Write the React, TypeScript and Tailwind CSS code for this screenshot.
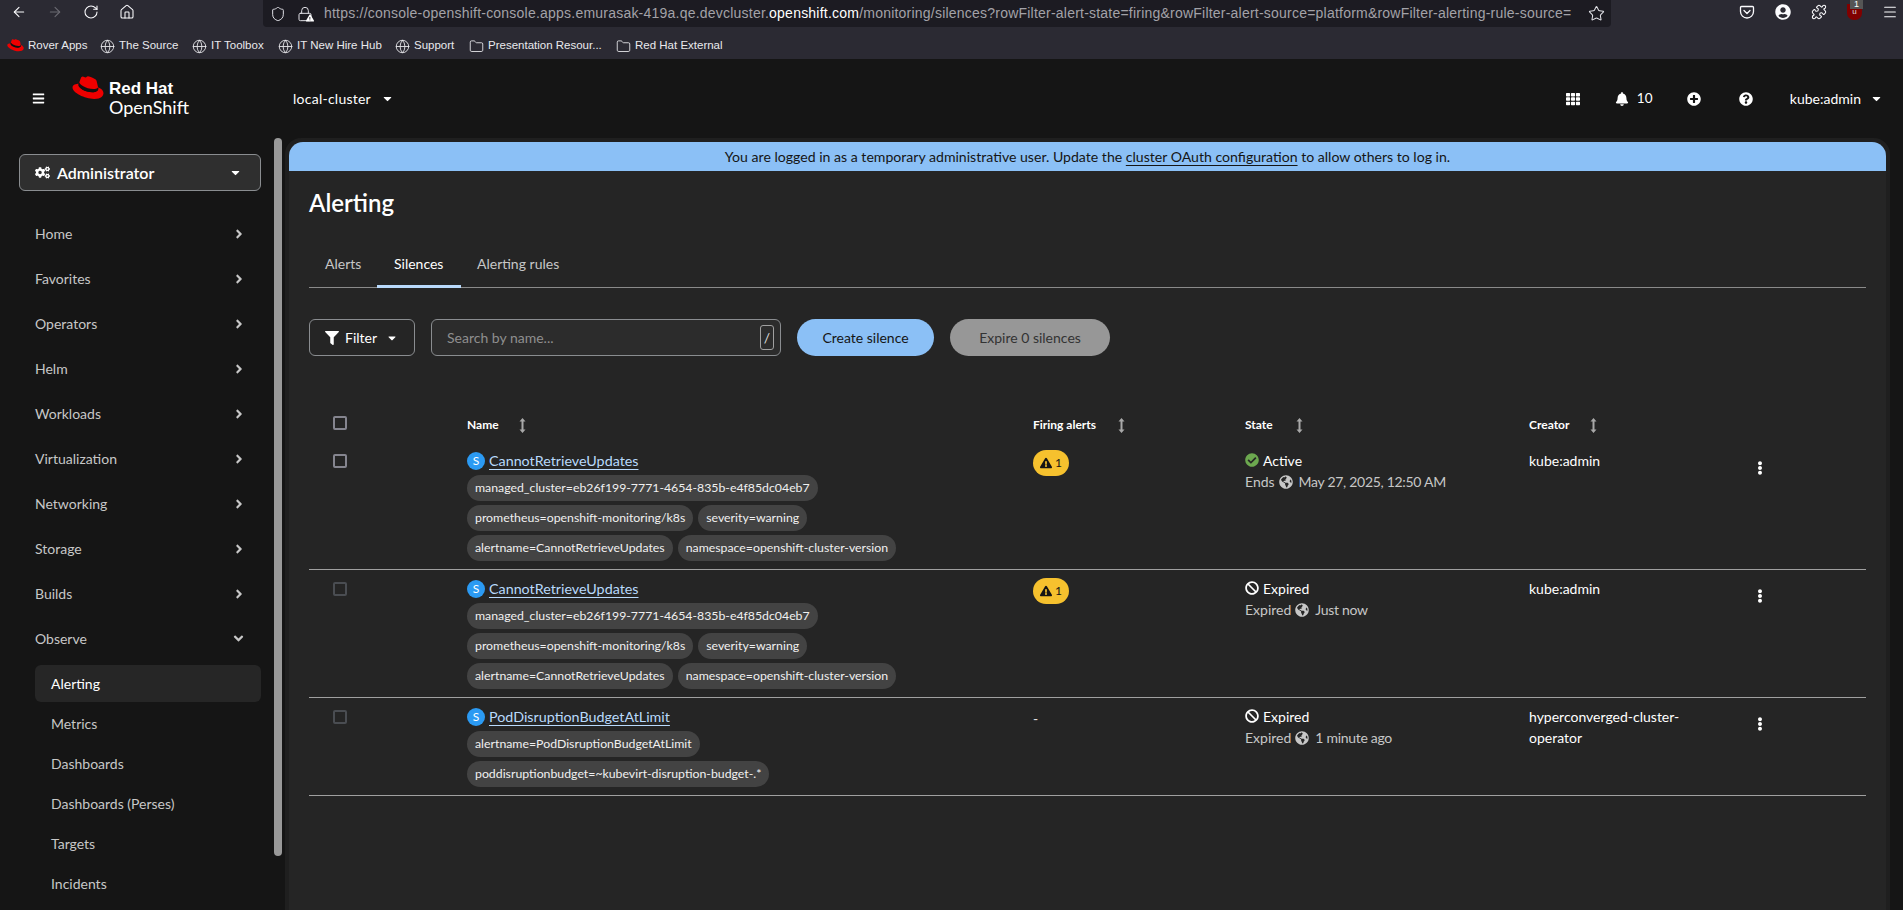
import React from "react";
import { ArrowLeft, ArrowRight, RotateCw, Home, Shield, Lock, Star, Globe, Folder, Menu, Puzzle } from "lucide-react";
import { FaAngleRight, FaAngleDown, FaBan, FaBars, FaBell, FaCaretDown, FaCheckCircle, FaCogs, FaEllipsisV, FaExclamationTriangle, FaFilter, FaGlobeAmericas, FaPlusCircle, FaQuestionCircle, FaTh, FaUserCircle } from "react-icons/fa";

function Hat({ size }: { size: number }) {
  return (
    <svg width={size} height={size * 0.78} viewBox="0 0 32 25" className="shrink-0">
      <path d="M21 14c2 0 5-.4 5-2.800 0-.2 0-.4-.1-.6L24.700 5.300C24.400 4.100 24.100 3.600 22 2.500 20.400 1.700 16.900.3 15.900.3c-1 0-1.200 1.200-2.300 1.200-1.100 0-1.900-.9-2.900-.9s-1.600.7-2.100 2.100c0 0-1.400 3.900-1.600 4.500 0 .1 0 .2 0 .3 0 1.500 5.900 6.500 14 6.500z" fill="#ee0000" />
      <path d="M26 11.200c.3 1.300.3 1.400.3 1.600 0 2.200-2.500 3.500-5.800 3.500-7.500 0-14-4.400-14-7.300 0-.4.100-.8.300-1.200C4.100 8 .5 8.500.5 11.600c0 5.100 12.100 11.400 21.700 11.400 7.400 0 9.300-3.300 9.300-6 0-2.100-1.800-4.500-5.500-5.800z" fill="#ee0000" />
      <path d="M26 11.200c.3 1.300.3 1.400.3 1.600 0 2.200-2.500 3.500-5.800 3.500-7.500 0-14-4.400-14-7.300 0-.4.100-.8.300-1.200l.6-1.500c0 .1 0 .2 0 .3 0 1.500 5.900 6.500 14 6.500 2 0 5-.4 5-2.800 0-.2 0-.4-.1-.6z" fill="#111" />
    </svg>
  );
}

function SortIcon() {
  return (
    <svg width="7" height="15" viewBox="0 0 7 15" className="shrink-0 text-[#a8a8a8]">
      <path d="M3.500 0 6.500 3.500H4.500V11.500H6.500L3.500 15 .5 11.500H2.500V3.500H.5Z" fill="currentColor" />
    </svg>
  );
}

function PocketIcon() {
  return (
    <svg width="16" height="16" viewBox="0 0 16 16" fill="none" stroke="currentColor" strokeWidth="1.300" className="shrink-0">
      <path d="M2.500 2.500h11a1 1 0 0 1 1 1v4a6.500 6.500 0 0 1-13 0v-4a1 1 0 0 1 1-1z" />
      <path d="M5 6.500 8 9.500 11 6.500" strokeLinecap="round" strokeLinejoin="round" />
    </svg>
  );
}

function Bookmark({ icon, label, w }: { icon: "hat" | "globe" | "folder"; label: string; w: string }) {
  return (
    <div className={`flex items-center gap-[4px] ${w}`}>
      {icon === "hat" && <Hat size={17} />}
      {icon === "globe" && <Globe size={15} strokeWidth={1.4} className="shrink-0" />}
      {icon === "folder" && <Folder size={15} strokeWidth={1.4} className="shrink-0" />}
      <span className="whitespace-nowrap">{label}</span>
    </div>
  );
}

function BrowserChrome() {
  return (
    <div className="h-[59px] bg-[#2b2a33] text-[#fbfbfe] font-['Liberation_Sans',sans-serif]">
      <div className="h-[27px] flex items-center relative">
        <div className="w-[263px] shrink-0 flex items-center gap-[20px] pl-[11px] -mt-[3px]">
          <ArrowLeft size={16} strokeWidth={1.6} />
          <ArrowRight size={16} strokeWidth={1.6} className="text-[#6b6a72]" />
          <RotateCw size={16} strokeWidth={1.6} />
          <Home size={16} strokeWidth={1.6} />
        </div>
        <div className="w-[1348px] h-[27px] bg-[#1c1b22] rounded-b-[4px] flex items-center text-[14px] pl-[7px] pr-[6px] text-[#a3a2a8] overflow-hidden">
          <Shield size={16} strokeWidth={1.5} className="shrink-0 text-[#e0e0e6]" />
          <span className="relative ml-[11px] shrink-0">
            <Lock size={16} strokeWidth={1.5} className="text-[#e0e0e6]" />
            <FaExclamationTriangle size={8} className="absolute -right-[1px] bottom-0 text-white" />
          </span>
          <span className="ml-[11px] whitespace-nowrap overflow-hidden flex-1 tracking-[0.22px]">
            https://console-openshift-console.apps.emurasak-419a.qe.devcluster.<span className="text-white">openshift.com</span>/monitoring/silences?rowFilter-alert-state=firing&amp;rowFilter-alert-source=platform&amp;rowFilter-alerting-rule-source=
          </span>
          <Star size={17} strokeWidth={1.5} className="shrink-0 ml-[13px] text-[#e0e0e6]" />
        </div>
        <div className="flex items-center gap-[20px] ml-[128px] -mt-[3px]">
          <PocketIcon />
          <FaUserCircle size={16} />
          <Puzzle size={16} strokeWidth={1.6} />
          <div className="relative w-[15px] h-[16px] rounded-b-[7px] bg-[#800000] text-[8px] text-center text-[#ddd] leading-[16px]">
            u
            <span className="absolute -top-[5px] left-[3px] w-[13px] h-[10px] bg-[#555] text-[9px] leading-[10px] text-white">1</span>
          </div>
          <Menu size={16} strokeWidth={1.6} />
        </div>
      </div>
      <div className="h-[32px] flex items-center text-[11.500px] pl-[7px] pt-[6px] text-[#e9e9ed]">
        <Bookmark icon="hat" label="Rover Apps" w="w-[93px]" />
        <Bookmark icon="globe" label="The Source" w="w-[92px]" />
        <Bookmark icon="globe" label="IT Toolbox" w="w-[86px]" />
        <Bookmark icon="globe" label="IT New Hire Hub" w="w-[117px]" />
        <Bookmark icon="globe" label="Support" w="w-[74px]" />
        <Bookmark icon="folder" label="Presentation Resour..." w="w-[147px]" />
        <Bookmark icon="folder" label="Red Hat External" w="w-[110px]" />
      </div>
    </div>
  );
}

function Masthead() {
  return (
    <div className="h-[79px] flex items-center text-white">
      <FaBars size={13} className="ml-[32px] shrink-0" />
      <div className="ml-[27px] flex items-start w-[221px] self-start mt-[17px]">
        <Hat size={32} />
        <div className="ml-[5px]">
          <div className="text-[17px] leading-[17px] font-bold pt-[4px] font-['Liberation_Sans',sans-serif]">Red Hat</div>
          <div className="text-[18px] leading-[18px] pt-[1px] font-normal">OpenShift</div>
        </div>
      </div>
      <span className="text-[14px] tracking-[0.25px]">local-cluster</span>
      <FaCaretDown size={13} className="ml-[10px]" />
      <div className="ml-auto flex items-center pr-[20px]">
        <FaTh size={14} />
        <FaBell size={14} className="ml-[35px]" />
        <span className="text-[13.500px] ml-[8px] w-[15px]">10</span>
        <FaPlusCircle size={14} className="ml-[35px]" />
        <FaQuestionCircle size={14} className="ml-[38px]" />
        <span className="text-[14px] ml-[37px]">kube:admin</span>
        <FaCaretDown size={13} className="ml-[9px]" />
      </div>
    </div>
  );
}

function NavRow({ label, open }: { label: string; open?: boolean }) {
  return (
    <div className="h-[45px] flex items-center justify-between pl-[35px] pr-[39px] text-[14px] text-[#c7c7c7]">
      <span>{label}</span>
      {open ? <FaAngleDown size={15} /> : <FaAngleRight size={14} />}
    </div>
  );
}

function Sidebar() {
  const items = ["Home", "Favorites", "Operators", "Helm", "Workloads", "Virtualization", "Networking", "Storage", "Builds"];
  const subs = ["Metrics", "Dashboards", "Dashboards (Perses)", "Targets", "Incidents"];
  return (
    <div className="w-[285px] shrink-0 relative">
      <div className="absolute right-[3px] top-0 w-[8px] h-[718px] bg-[#999] rounded-[4px]" />
      <div className="ml-[19px] mt-[16px] w-[242px] h-[37px] rounded-[6px] border border-[#8a8d90] bg-[#2f2f2f] flex items-center pl-[15px] pr-[18px] text-white">
        <FaCogs size={15} />
        <span className="ml-[7px] text-[16px] font-semibold">Administrator</span>
        <FaCaretDown size={13} className="ml-auto" />
      </div>
      <div className="mt-[20px]">
        {items.map((i) => (
          <NavRow key={i} label={i} />
        ))}
        <NavRow label="Observe" open />
        <div className="ml-[35px] w-[226px] mt-[4px] mb-[1px] h-[37px] rounded-[6px] bg-[#262626] flex items-center pl-[16px] text-[14px] text-white">Alerting</div>
        {subs.map((s) => (
          <div key={s} className="ml-[35px] pl-[16px] h-[40px] flex items-center text-[14px] text-[#c7c7c7]">{s}</div>
        ))}
      </div>
    </div>
  );
}

function Label({ children }: { children: string }) {
  return (
    <span className="h-[26px] px-[8px] rounded-full bg-[#434343] text-[#f0f0f0] text-[12.300px] leading-[26px] whitespace-nowrap">{children}</span>
  );
}

type Row = {
  name: string;
  labels: string[][];
  firing: boolean;
  active: boolean;
  sub: string;
  when: string;
  creator: string;
  dim: boolean;
  height: string;
};

const rows: Row[] = [
  {
    name: "CannotRetrieveUpdates",
    labels: [
      ["managed_cluster=eb26f199-7771-4654-835b-e4f85dc04eb7"],
      ["prometheus=openshift-monitoring/k8s", "severity=warning"],
      ["alertname=CannotRetrieveUpdates", "namespace=openshift-cluster-version"],
    ],
    firing: true,
    active: true,
    sub: "Ends",
    when: "May 27, 2025, 12:50 AM",
    creator: "kube:admin",
    dim: false,
    height: "h-[128px]",
  },
  {
    name: "CannotRetrieveUpdates",
    labels: [
      ["managed_cluster=eb26f199-7771-4654-835b-e4f85dc04eb7"],
      ["prometheus=openshift-monitoring/k8s", "severity=warning"],
      ["alertname=CannotRetrieveUpdates", "namespace=openshift-cluster-version"],
    ],
    firing: true,
    active: false,
    sub: "Expired",
    when: "Just now",
    creator: "kube:admin",
    dim: true,
    height: "h-[128px]",
  },
  {
    name: "PodDisruptionBudgetAtLimit",
    labels: [["alertname=PodDisruptionBudgetAtLimit"], ["poddisruptionbudget=~kubevirt-disruption-budget-.*"]],
    firing: false,
    active: false,
    sub: "Expired",
    when: "1 minute ago",
    creator: "hyperconverged-cluster-operator",
    dim: true,
    height: "h-[98px]",
  },
];

const gridCols = "grid grid-cols-[158px_566px_212px_284px_190px_147px]";

function Head({ label, gap }: { label: string; gap: string }) {
  return (
    <div className={`flex items-center ${gap} text-[12px] font-bold text-white leading-[18px]`}>
      <span>{label}</span>
      <SortIcon />
    </div>
  );
}

function SilenceRow({ r }: { r: Row }) {
  return (
    <div className={`${gridCols} ${r.height} border-b border-[#a0a0a0] pt-[10px] text-[14px]`}>
      <div className="pl-[24px] pt-[2px]">
        <div className={`w-[14px] h-[14px] rounded-[2px] border-2 ${r.dim ? "border-[#4a4d52]" : "border-[#85858f]"}`} />
      </div>
      <div>
        <div className="flex items-center h-[18px]">
          <span className="w-[18px] h-[18px] rounded-full bg-[#2b9af3] text-white text-[12px] leading-[18px] text-center shrink-0">S</span>
          <span className="ml-[4px] text-[14.300px] text-[#b9dafc] underline underline-offset-[3px]">{r.name}</span>
        </div>
        <div className="mt-[5px] flex flex-col gap-[4px]">
          {r.labels.map((l, i) => (
            <div key={i} className="flex gap-[5px]">
              {l.map((t) => (
                <Label key={t}>{t}</Label>
              ))}
            </div>
          ))}
        </div>
      </div>
      <div>
        {r.firing ? (
          <span className="inline-flex items-center justify-center w-[36px] h-[26px] -mt-[2px] rounded-full bg-[#f6c12e] text-[#151515] text-[12px] gap-[3px]">
            <FaExclamationTriangle size={12} />1
          </span>
        ) : (
          <span className="text-[#e0e0e0]">-</span>
        )}
      </div>
      <div className="-mt-[1px]">
        <div className="flex items-center gap-[4px] h-[18px] text-white">
          {r.active ? <FaCheckCircle size={14} className="text-[#6ca84f]" /> : <FaBan size={14} />}
          <span>{r.sub === "Ends" ? "Active" : "Expired"}</span>
        </div>
        <div className="flex items-center gap-[4px] mt-[4px] text-[#c7c7c7] leading-[18px]">
          <span>{r.sub}</span>
          <FaGlobeAmericas size={14} />
          <span className="ml-[2px] tracking-[-0.3px]">{r.when}</span>
        </div>
      </div>
      <div className="text-white leading-[21px] -mt-[2px]">{r.creator}</div>
      <div className="pl-[34px] pt-[9px]">
        <FaEllipsisV size={14} className="text-white" />
      </div>
    </div>
  );
}

function Content() {
  return (
    <div className="w-[1605px] shrink-0 bg-[#1f1f1f] rounded-t-[16px] pl-[4px] pr-[4px] pt-[4px]">
      <div className="bg-[#252525] h-full rounded-t-[14px] w-[1597px]">
        <div className="h-[29px] bg-[#8bc0f6] rounded-t-[14px] flex items-center justify-center text-[14.100px] text-[#151515]">
          <span>
            You are logged in as a temporary administrative user. Update the{" "}
            <span className="underline underline-offset-[3px]">cluster OAuth configuration</span> to allow others to log in.
          </span>
        </div>
        <div className="pl-[20px] pr-[20px]">
          <h1 className="text-[24px] leading-[32px] font-semibold text-white mt-[16px]">Alerting</h1>
          <div className="mt-[28px] h-[41px] flex border-b border-[#8a8a8a] text-[14px] text-[#c7c7c7]">
            <div className="w-[68px] pl-[16px] pt-[6px]">Alerts</div>
            <div className="w-[84px] pl-[17px] pt-[6px] text-white border-b-[3px] border-[#b9dafc] h-[41px]">Silences</div>
            <div className="pl-[16px] pt-[6px]">Alerting rules</div>
          </div>
          <div className="mt-[31px] flex items-center text-[14px]">
            <div className="w-[106px] h-[37px] rounded-[6px] border border-[#8a8d90] flex items-center pl-[15px] text-white">
              <FaFilter size={14} />
              <span className="ml-[6px]">Filter</span>
              <FaCaretDown size={12} className="ml-[9px]" />
            </div>
            <div className="ml-[16px] w-[350px] h-[37px] rounded-[6px] border border-[#8a8d90] bg-[#2c2c2c] flex items-center pl-[15px] pr-[6px] text-[#8f8f8f]">
              <span>Search by name...</span>
              <span className="ml-auto w-[14px] h-[25px] rounded-[3px] border border-[#a0a0a0] text-[#ddd] flex items-center justify-center">/</span>
            </div>
            <div className="ml-[16px] w-[137px] h-[37px] rounded-full bg-[#8bc0f6] text-[#151515] flex items-center justify-center">Create silence</div>
            <div className="ml-[16px] w-[160px] h-[37px] rounded-full bg-[#979797] text-[#333] flex items-center justify-center">Expire 0 silences</div>
          </div>
          <div className="mt-[60px]">
            <div className={`${gridCols} h-[26px]`}>
              <div className="pl-[24px]">
                <div className="w-[14px] h-[14px] rounded-[2px] border-2 border-[#85858f]" />
              </div>
              <div><Head label="Name" gap="gap-[20px]" /></div>
              <div><Head label="Firing alerts" gap="gap-[22px]" /></div>
              <div><Head label="State" gap="gap-[23px]" /></div>
              <div><Head label="Creator" gap="gap-[21px]" /></div>
              <div />
            </div>
            {rows.map((r, i) => (
              <SilenceRow key={i} r={r} />
            ))}
          </div>
        </div>
      </div>
    </div>
  );
}

export default function App() {
  return (
    <div className="w-[1903px] h-[910px] overflow-hidden bg-[#151515] font-['Lato',sans-serif] flex flex-col">
      <BrowserChrome />
      <Masthead />
      <div className="flex flex-1 min-h-0">
        <Sidebar />
        <Content />
      </div>
    </div>
  );
}
